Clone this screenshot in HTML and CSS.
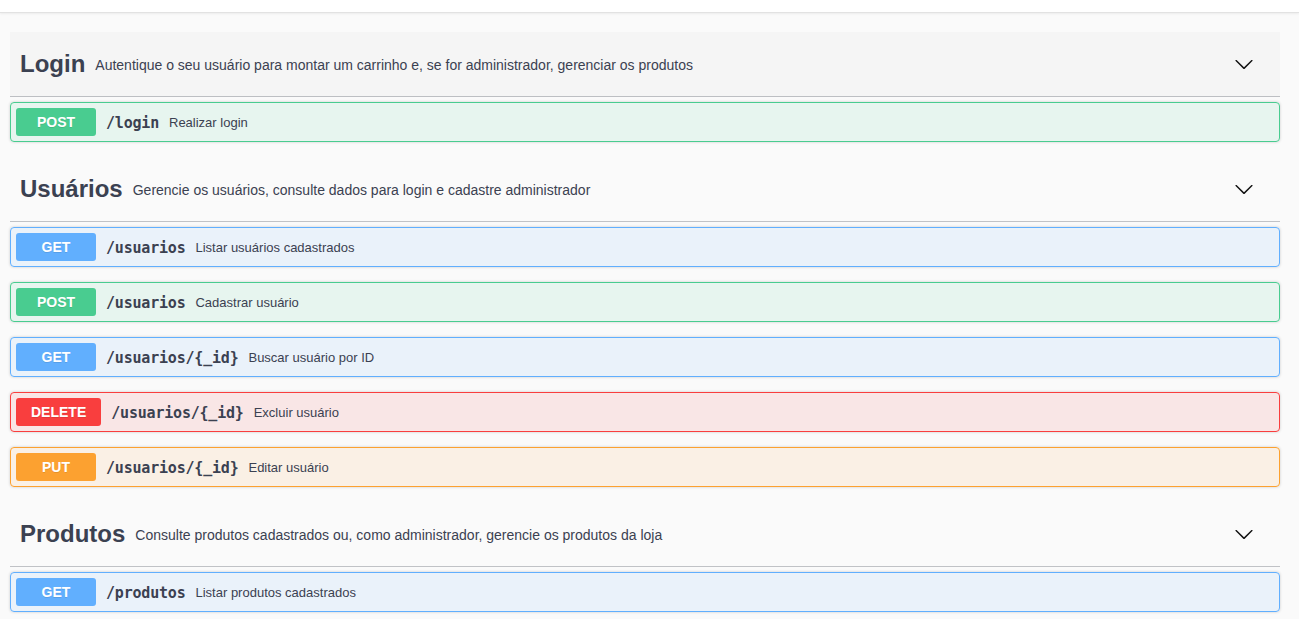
FILE: index.html
```html
<!DOCTYPE html>
<html lang="pt-BR">
<head>
<meta charset="utf-8">
<title>Swagger</title>
<link rel="stylesheet" href="styles.css">
</head>
<body>
<div class="topbar"></div>
<main class="wrapper">
  <section class="tag-section">
    <div class="tag tag-hover">
      <h3 class="tag-title">Login</h3>
      <small class="tag-desc">Autentique o seu usuário para montar um carrinho e, se for administrador, gerenciar os produtos</small>
      <button class="expand"><svg width="20" height="20" viewBox="0 0 20 20"><path d="M17.418 6.109c.272-.268.709-.268.979 0s.271.701 0 .969l-7.908 7.83c-.27.268-.707.268-.979 0l-7.908-7.830c-.27-.268-.27-.701 0-.969.271-.268.709-.268.979 0L10 13.25l7.418-7.141z"/></svg></button>
    </div>
    <div class="op op-post"><span class="method">POST</span><span class="path">/login</span><span class="desc">Realizar login</span></div>
  </section>

  <section class="tag-section">
    <div class="tag">
      <h3 class="tag-title">Usuários</h3>
      <small class="tag-desc">Gerencie os usuários, consulte dados para login e cadastre administrador</small>
      <button class="expand"><svg width="20" height="20" viewBox="0 0 20 20"><path d="M17.418 6.109c.272-.268.709-.268.979 0s.271.701 0 .969l-7.908 7.83c-.27.268-.707.268-.979 0l-7.908-7.83c-.27-.268-.27-.701 0-.969.271-.268.709-.268.979 0L10 13.25l7.418-7.141z"/></svg></button>
    </div>
    <div class="op op-get"><span class="method">GET</span><span class="path">/usuarios</span><span class="desc">Listar usuários cadastrados</span></div>
    <div class="op op-post"><span class="method">POST</span><span class="path">/usuarios</span><span class="desc">Cadastrar usuário</span></div>
    <div class="op op-get"><span class="method">GET</span><span class="path">/usuarios/{_id}</span><span class="desc">Buscar usuário por ID</span></div>
    <div class="op op-delete"><span class="method">DELETE</span><span class="path">/usuarios/{_id}</span><span class="desc">Excluir usuário</span></div>
    <div class="op op-put"><span class="method">PUT</span><span class="path">/usuarios/{_id}</span><span class="desc">Editar usuário</span></div>
  </section>

  <section class="tag-section">
    <div class="tag">
      <h3 class="tag-title">Produtos</h3>
      <small class="tag-desc">Consulte produtos cadastrados ou, como administrador, gerencie os produtos da loja</small>
      <button class="expand"><svg width="20" height="20" viewBox="0 0 20 20"><path d="M17.418 6.109c.272-.268.709-.268.979 0s.271.701 0 .969l-7.908 7.83c-.27.268-.707.268-.979 0l-7.908-7.83c-.27-.268-.27-.701 0-.969.271-.268.709-.268.979 0L10 13.25l7.418-7.141z"/></svg></button>
    </div>
    <div class="op op-get"><span class="method">GET</span><span class="path">/produtos</span><span class="desc">Listar produtos cadastrados</span></div>
  </section>
</main>
</body>
</html>
```
FILE: styles.css
```css
* { box-sizing: border-box; }
html, body { margin: 0; padding: 0; }
body {
  background: #fafafa;
  font-family: "Liberation Sans", Arial, sans-serif;
  color: #3b4151;
  overflow: hidden;
}
.topbar {
  height: 13px;
  background: #fff;
  border-bottom: 1px solid #e2e2e2;
  box-shadow: 0 1px 2px rgba(0,0,0,.06);
}
.wrapper {
  padding: 19px 19px 0 10px;
  display: flex;
  flex-direction: column;
}
.tag-section {
  display: flex;
  flex-direction: column;
}
.tag {
  display: flex;
  align-items: center;
  height: 65px;
  padding: 0 26px 0 10px;
  margin: 0 0 5px;
  border-bottom: 1px solid rgba(59,65,81,.3);
}
.tag-hover { background: rgba(0,0,0,.02); }
.tag-title {
  margin: 0;
  font-size: 24px;
  font-weight: 700;
  color: #3b4151;
  line-height: 30px;
}
.tag-desc {
  flex: 1;
  font-size: 14px;
  padding: 0 10px;
  color: #3b4151;
  position: relative;
  top: 1px;
}
.expand {
  border: none;
  background: none;
  padding: 0;
  width: 20px;
  height: 20px;
  display: flex;
}
.expand svg { fill: #111; }
.op {
  display: flex;
  align-items: center;
  height: 40px;
  padding: 5px;
  margin: 0 0 15px;
  border: 1px solid #000;
  border-radius: 4px;
  box-shadow: 0 0 3px rgba(0,0,0,.19);
}
.method {
  min-width: 80px;
  height: 28px;
  padding: 0 15px;
  border-radius: 3px;
  color: #fff;
  font-size: 14px;
  font-weight: 700;
  display: flex;
  align-items: center;
  justify-content: center;
  text-shadow: 0 1px 0 rgba(0,0,0,.1);
}
.path {
  font-family: "DejaVu Sans Mono", "Liberation Mono", monospace;
  font-size: 15px;
  font-weight: 700;
  letter-spacing: -0.2px;
  padding: 0 10px;
  color: #3b4151;
  position: relative;
  top: 1px;
}
.desc {
  font-size: 13px;
  color: #3b4151;
}
.op-post { border-color: #49cc90; background: rgba(73,204,144,.1); }
.op-post .method { background: #49cc90; }
.op-get { border-color: #61affe; background: rgba(97,175,254,.1); }
.op-get .method { background: #61affe; }
.op-delete { border-color: #f93e3e; background: rgba(249,62,62,.1); }
.op-delete .method { background: #f93e3e; }
.op-put { border-color: #fca130; background: rgba(252,161,48,.1); }
.op-put .method { background: #fca130; }
```
